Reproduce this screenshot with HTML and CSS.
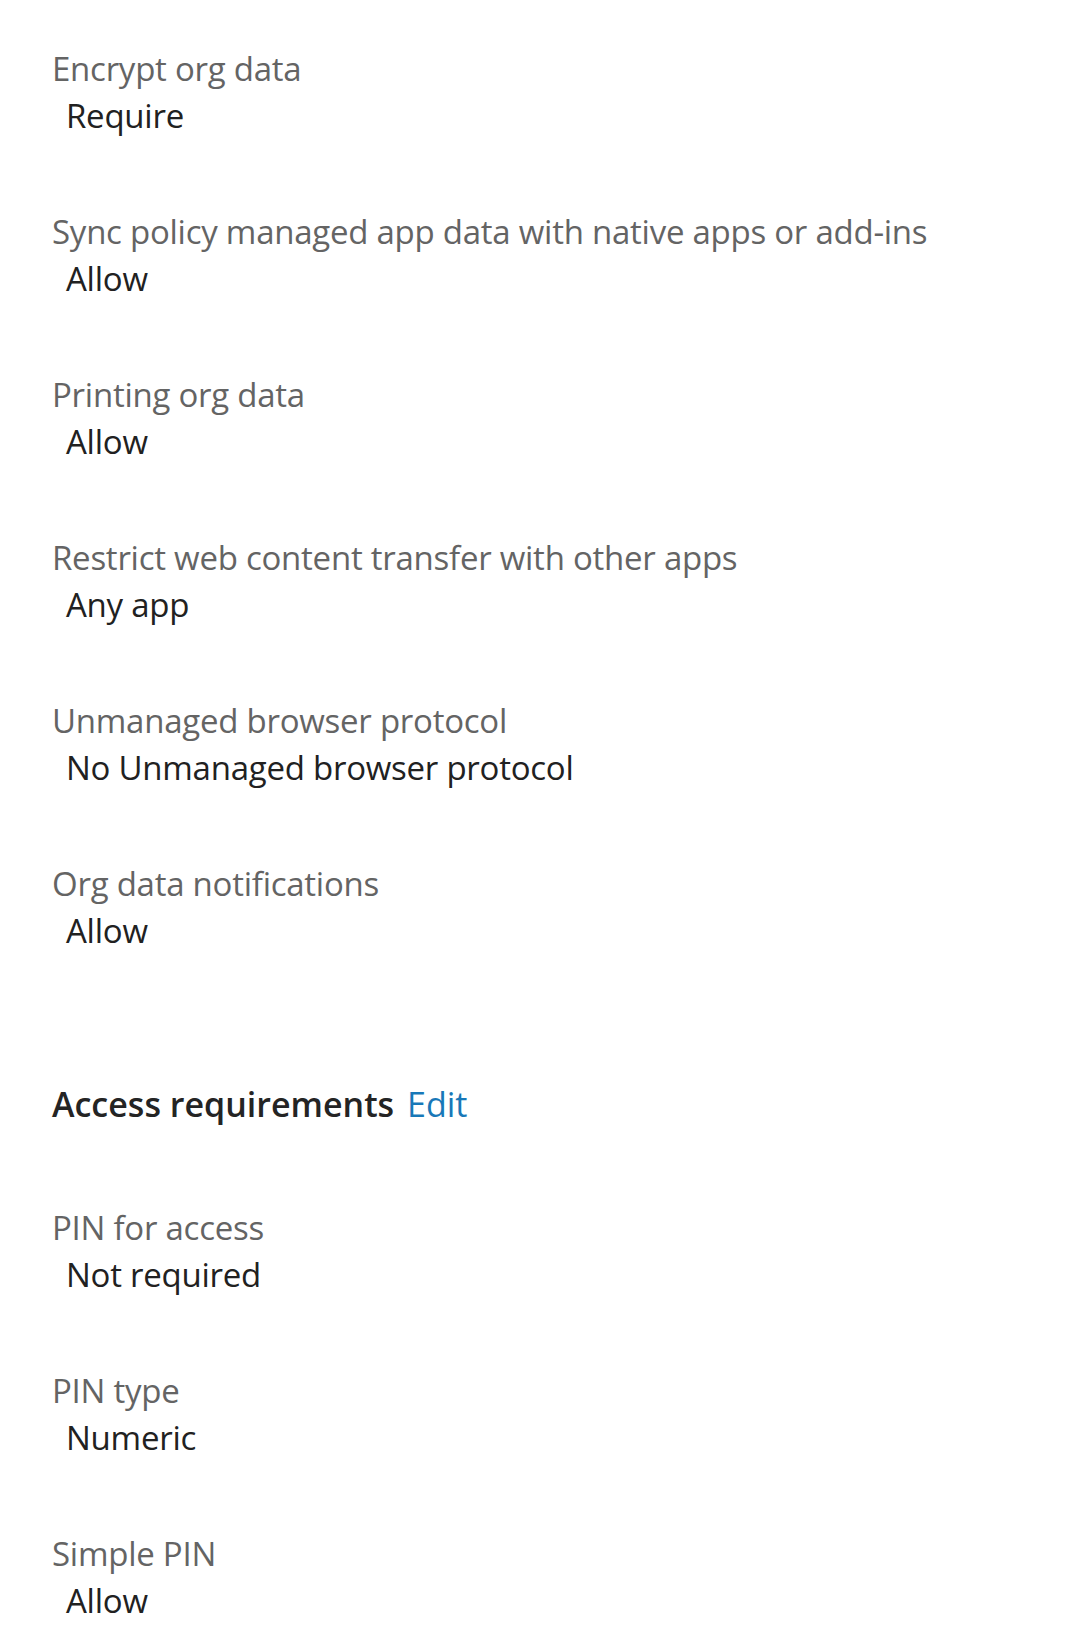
FILE: index.html
```html
<!DOCTYPE html>
<html>
<head>
  <meta charset="UTF-8">
  <title>App protection policy</title>
  <link rel="stylesheet" href="styles.css">
</head>
<body>
  <main class="details">
    <section class="group">
      <div class="field">
        <div class="field-label">Encrypt org data</div>
        <div class="field-value">Require</div>
      </div>
      <div class="field">
        <div class="field-label">Sync policy managed app data with native apps or add-ins</div>
        <div class="field-value">Allow</div>
      </div>
      <div class="field">
        <div class="field-label">Printing org data</div>
        <div class="field-value">Allow</div>
      </div>
      <div class="field">
        <div class="field-label">Restrict web content transfer with other apps</div>
        <div class="field-value">Any app</div>
      </div>
      <div class="field">
        <div class="field-label">Unmanaged browser protocol</div>
        <div class="field-value">No Unmanaged browser protocol</div>
      </div>
      <div class="field">
        <div class="field-label">Org data notifications</div>
        <div class="field-value">Allow</div>
      </div>
    </section>

    <section class="group">
      <h2 class="group-title">Access requirements <a class="edit-link" href="#">Edit</a></h2>
      <div class="field">
        <div class="field-label">PIN for access</div>
        <div class="field-value">Not required</div>
      </div>
      <div class="field">
        <div class="field-label">PIN type</div>
        <div class="field-value">Numeric</div>
      </div>
      <div class="field">
        <div class="field-label">Simple PIN</div>
        <div class="field-value">Allow</div>
      </div>
    </section>
  </main>
</body>
</html>
```

FILE: styles.css
```css
body {
  margin: 0;
  background: #fff;
  font-family: "Open Sans", "Noto Sans", sans-serif;
  font-size: 33px;
  line-height: 47px;
  letter-spacing: -0.25px;
}
.details {
  display: flex;
  flex-direction: column;
  gap: 127px;
  padding: 45px 0 0 52px;
}
.group {
  display: flex;
  flex-direction: column;
  gap: 69px;
}
.field-label {
  color: #646464;
}
.field-value {
  color: #212121;
  padding-left: 14px;
}
.group-title {
  margin: 0 0 7px;
  font-size: 34px;
  font-weight: 600;
  letter-spacing: 0;
  color: #242424;
}
.edit-link {
  margin-left: 4px;
  font-weight: 400;
  color: #1878b8;
  text-decoration: none;
}
```
